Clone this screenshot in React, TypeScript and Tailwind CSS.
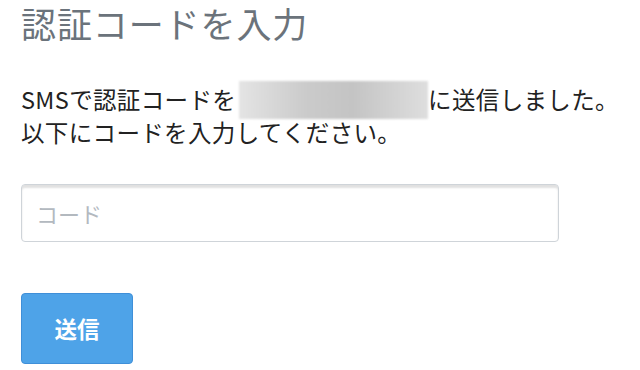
const fontStack = "font-['Noto_Sans_CJK_JP','Noto_Sans',sans-serif]";

export default function App() {
  return (
    <div className={`h-[370px] w-[640px] overflow-hidden bg-white px-[21px] ${fontStack}`}>
      <h1 className="pt-[1px] text-[35px] leading-[44px] font-normal tracking-[0.9px] text-[#6b737b]">
        認証コードを入力
      </h1>

      <p className="mt-[33px] text-[23.5px] leading-[33px] tracking-[0.35px] text-[#222222]">
        SMSで認証コードを
        <span className="ml-[3px] inline-block h-[38px] w-[189px] translate-y-[3px] bg-[linear-gradient(90deg,#e4e4e4,#cbcbcb_35%,#c4c4c4_60%,#dedede)] align-bottom blur-[1px]" />
        に送信しました。
        <br />
        以下にコードを入力してください。
      </p>

      <input
        type="text"
        placeholder="コード"
        className="mt-[35px] block h-[58px] w-[538px] rounded-[4px] border border-[#cfd4d9] bg-white px-[14px] text-[22px] text-[#222222] shadow-[inset_0_3px_2px_rgba(0,0,0,0.12)] outline-none placeholder:text-[#b3b9bf]"
      />

      <button
        type="button"
        className="mt-[51px] block h-[71px] w-[112px] rounded-[4px] border border-[#3f8fd8] bg-[#4ea3e8] text-[22.5px] font-bold text-white"
      >
        送信
      </button>
    </div>
  );
}
